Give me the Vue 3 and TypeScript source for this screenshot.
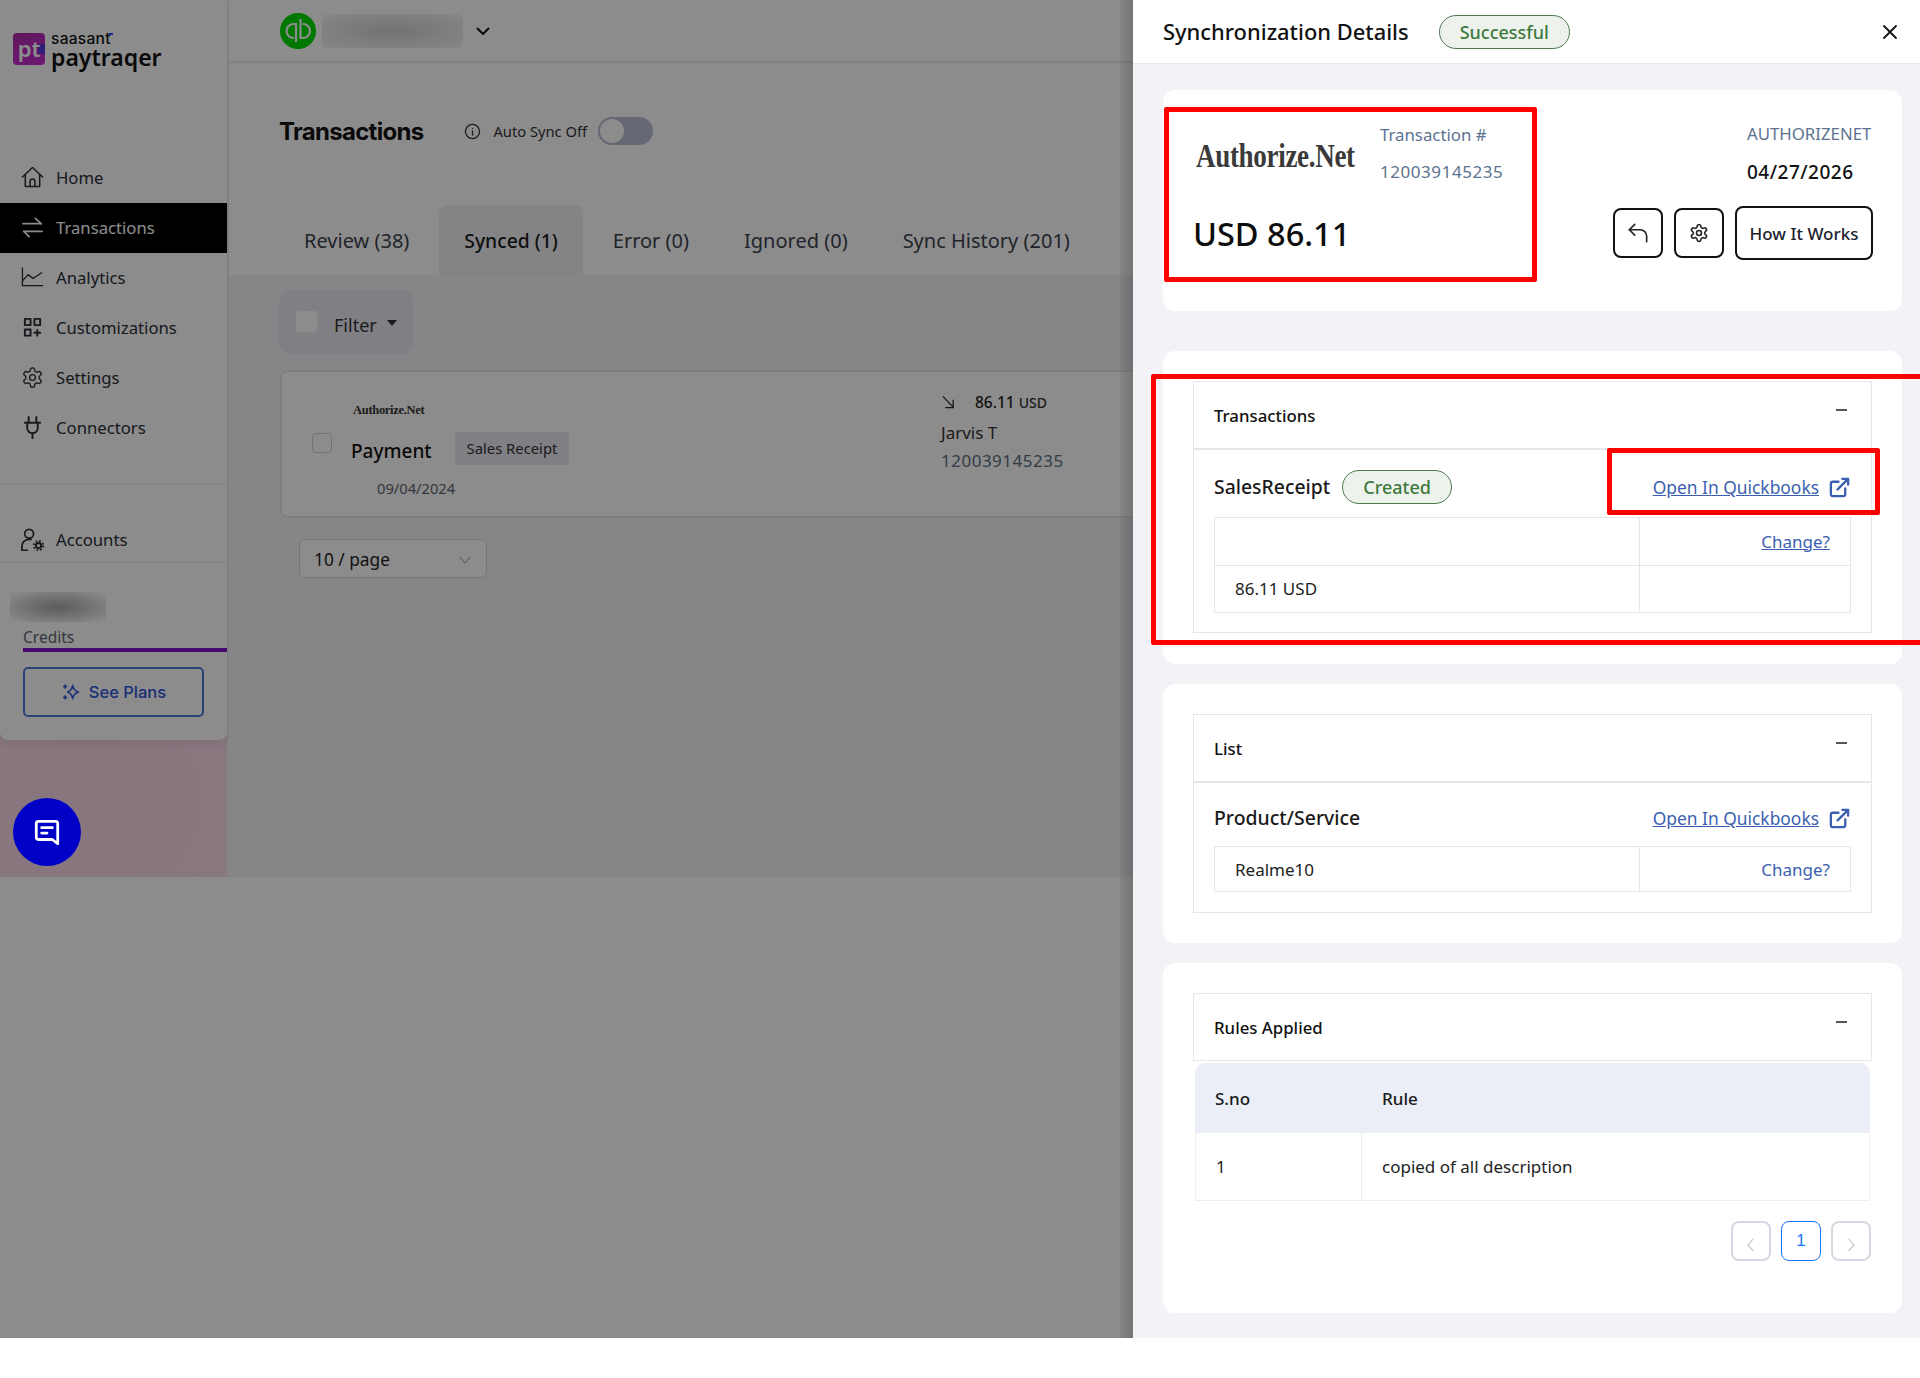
<template>
  <div class="page">
    <div class="app">
      <aside class="sidebar">
        <div class="side-card">
          <div class="logo-row">
            <div class="logo-mark">pt</div>
            <div class="logo-text">
              <span class="logo-top">saasant</span>
              <span class="logo-main">paytraqer</span>
            </div>
          </div>
          <nav class="nav">
            <a
              v-for="item in navItems"
              :key="item.label"
              class="nav-item"
              :class="{ active: item.label === 'Transactions' }"
            >
              <svg class="nav-icon" viewBox="0 0 24 24" fill="none" stroke="currentColor" :stroke-width="item.weight ?? 1.6" stroke-linecap="round" stroke-linejoin="round">
                <path v-for="d in item.paths" :key="d" :d="d" />
                <circle v-if="item.circle" cx="12" cy="12" r="3" />
              </svg>
              <span>{{ item.label }}</span>
            </a>
          </nav>
          <div class="accounts">
            <a class="nav-item">
              <svg class="nav-icon" viewBox="0 0 24 24" fill="none" stroke="currentColor" stroke-width="1.800" stroke-linecap="round" stroke-linejoin="round">
                <circle cx="8.500" cy="6" r="4.600" />
                <path d="M6.500 23.300H1V19a7 7 0 0 1 7-7h2.500" />
                <circle cx="18.300" cy="18.300" r="2.700" stroke-width="2" />
                <circle cx="18.300" cy="18.300" r="4.800" stroke-width="1.900" stroke-linecap="butt" stroke-dasharray="1.900 1.870" />
              </svg>
              <span>Accounts</span>
            </a>
          </div>
          <div class="credits">
            <div class="blur-credit"></div>
            <div class="credit-label">Credits</div>
            <div class="credit-bar"></div>
            <button class="plans-btn">
              <svg class="spark" viewBox="0 0 24 24" fill="none" stroke="currentColor" stroke-width="1.800" stroke-linejoin="round">
                <path d="M14 4c.8 4.600 2.400 6.600 7 8-4.600 1.400-6.200 3.400-7 8-.8-4.600-2.400-6.600-6-8 3.600-1.400 5.200-3.400 6-8z" />
                <path d="M5 3v5M2.500 5.500h5M5 16v5M2.500 18.500h5" />
              </svg>
              See Plans
            </button>
          </div>
        </div>
      </aside>

      <main class="main">
        <header class="topbar">
          <svg class="qb" viewBox="0 0 36 36" fill="none" stroke="#fff" stroke-width="2.200">
            <circle cx="18" cy="18" r="18" fill="#00da00" stroke="none" />
            <path d="M16 29V11h-2.500a7 7 0 0 0 0 14H14" />
            <path d="M20.500 6v19H23a7 7 0 0 0 0-14h-.5" />
          </svg>
          <div class="blur-name"></div>
          <svg class="chev" viewBox="0 0 16 16" fill="none" stroke="#111" stroke-width="2" stroke-linecap="round" stroke-linejoin="round">
            <path d="M2.500 5.500 8 11l5.500-5.500" />
          </svg>
        </header>

        <div class="title-row">
          <h1>Transactions</h1>
          <svg class="info" viewBox="0 0 24 24" fill="none" stroke="currentColor" stroke-width="1.800" stroke-linecap="round">
            <circle cx="12" cy="12" r="10" />
            <path d="M12 11v6M12 7.500v.1" />
          </svg>
          <span class="sync-label">Auto Sync Off</span>
          <div class="toggle"><div class="knob"></div></div>
        </div>

        <div class="tabs">
          <div
            v-for="tab in tabs"
            :key="tab"
            class="tab"
            :class="{ current: tab === 'Synced (1)' }"
          >{{ tab }}</div>
        </div>

        <div class="content">
          <div class="filter">
            <div class="check big"></div>
            <span>Filter</span>
            <i class="caret"></i>
          </div>

          <div class="txn-card">
            <div class="txn-left">
              <div class="small-logo">Authorize.Net</div>
              <div class="txn-row">
                <div class="check"></div>
                <span class="payment">Payment</span>
                <span class="tag">Sales Receipt</span>
              </div>
              <div class="txn-date">09/04/2024</div>
            </div>
            <div class="txn-right">
              <div class="amount-row">
                <svg class="arrow" viewBox="0 0 16 16" fill="none" stroke="#222" stroke-width="1.300">
                  <path d="M2 1.500 13 13M13 5v8.500H4.500" />
                </svg>
                <span class="amount">86.11</span>
                <span class="cur">USD</span>
              </div>
              <div class="payer">Jarvis T</div>
              <div class="ref">120039145235</div>
            </div>
          </div>

          <div class="page-size">
            <span>10 / page</span>
            <svg viewBox="0 0 16 16" fill="none" stroke="#aaa" stroke-width="1.200">
              <path d="M2 4.500 8 11.500l6-7" />
            </svg>
          </div>
        </div>
      </main>
    </div>

    <div class="backdrop"></div>

    <button class="chat">
      <svg viewBox="0 0 28 28" fill="none" stroke="#fff" stroke-width="2.600" stroke-linejoin="round" stroke-linecap="round">
        <path d="M4 6a2 2 0 0 1 2-2h16a2 2 0 0 1 2 2v19l-5-4H6a2 2 0 0 1-2-2z" />
        <path d="M9 10h10M9 15h5" />
      </svg>
    </button>

    <section class="drawer">
      <header class="drawer-head">
        <h2>Synchronization Details</h2>
        <span class="pill pill-lg">Successful</span>
        <svg class="close" viewBox="0 0 16 16" fill="none" stroke="#111" stroke-width="1.800" stroke-linecap="round">
          <path d="M2 2l12 12M14 2 2 14" />
        </svg>
      </header>

      <div class="drawer-body">
        <div class="card summary">
          <div class="red-box box-summary"></div>
          <div class="summary-left">
            <div class="summary-top">
              <div class="auth-logo">Authorize.Net</div>
              <div class="txn-id">
                <div>Transaction #</div>
                <div class="txn-num">120039145235</div>
              </div>
            </div>
            <div class="total">USD 86.11</div>
          </div>
          <div class="summary-right">
            <div class="source">AUTHORIZENET</div>
            <div class="date-line">04/27/2026</div>
            <div class="actions">
              <button class="sq-btn">
                <svg class="back-icon" viewBox="0 0 24 24" fill="none" stroke="#222" stroke-width="1.500" stroke-linecap="round" stroke-linejoin="round">
                  <path d="M9 14 4 9l5-5" />
                  <path d="M4 9h10a6 6 0 0 1 6 6v5" />
                </svg>
              </button>
              <button class="sq-btn">
                <svg viewBox="0 0 24 24" fill="none" stroke="#222" stroke-width="1.900" stroke-linecap="round" stroke-linejoin="round">
                  <path :d="gearPath" />
                  <circle cx="12" cy="12" r="3" />
                </svg>
              </button>
              <button class="how-btn">How It Works</button>
            </div>
          </div>
        </div>

        <div class="card sec-txn">
          <div class="red-box box-section"></div>
          <div class="accordion">
            <div class="acc-head">
              <span>Transactions</span>
              <i class="minus"></i>
            </div>
            <div class="acc-body">
              <div class="acc-row">
                <span class="row-title">SalesReceipt</span>
                <span class="pill">Created</span>
                <div class="red-box box-link"></div>
                <a class="open-link">
                  <span>Open In Quickbooks</span>
                  <svg viewBox="0 0 24 24" fill="none" stroke="currentColor" stroke-width="2.400" stroke-linecap="round" stroke-linejoin="round">
                    <path d="M18 13v6a2 2 0 0 1-2 2H5a2 2 0 0 1-2-2V8a2 2 0 0 1 2-2h6" />
                    <path d="M15 3h6v6M10 14 21 3" />
                  </svg>
                </a>
              </div>
              <div class="kv tall">
                <div class="kv-cell"></div>
                <div class="kv-cell right"><a class="change under">Change?</a></div>
                <div class="kv-cell">86.11 USD</div>
                <div class="kv-cell"></div>
              </div>
            </div>
          </div>
        </div>

        <div class="card">
          <div class="accordion">
            <div class="acc-head">
              <span>List</span>
              <i class="minus"></i>
            </div>
            <div class="acc-body short">
              <div class="acc-row">
                <span class="row-title">Product/Service</span>
                <a class="open-link">
                  <span>Open In Quickbooks</span>
                  <svg viewBox="0 0 24 24" fill="none" stroke="currentColor" stroke-width="2.400" stroke-linecap="round" stroke-linejoin="round">
                    <path d="M18 13v6a2 2 0 0 1-2 2H5a2 2 0 0 1-2-2V8a2 2 0 0 1 2-2h6" />
                    <path d="M15 3h6v6M10 14 21 3" />
                  </svg>
                </a>
              </div>
              <div class="kv">
                <div class="kv-cell">Realme10</div>
                <div class="kv-cell right"><a class="change">Change?</a></div>
              </div>
            </div>
          </div>
        </div>

        <div class="card rules">
          <div class="accordion">
            <div class="acc-head no-line">
              <span>Rules Applied</span>
              <i class="minus"></i>
            </div>
          </div>
          <table class="rules-table">
            <thead>
              <tr>
                <th class="col-no">S.no</th>
                <th>Rule</th>
              </tr>
            </thead>
            <tbody>
              <tr v-for="rule in rules" :key="rule.no">
                <td class="col-no">{{ rule.no }}</td>
                <td>{{ rule.text }}</td>
              </tr>
            </tbody>
          </table>
          <div class="pager">
            <button class="pg off">
              <svg viewBox="0 0 12 12" fill="none" stroke="currentColor" stroke-width="1"><path d="M8 1.500 3.500 7 8 12" /></svg>
            </button>
            <button class="pg on">1</button>
            <button class="pg off">
              <svg viewBox="0 0 12 12" fill="none" stroke="currentColor" stroke-width="1"><path d="M4 1.500 8.500 7 4 12" /></svg>
            </button>
          </div>
        </div>
      </div>
    </section>
  </div>
</template>

<script setup lang="ts">
const gearPath =
  'M12.22 2h-.44a2 2 0 0 0-2 2v.18a2 2 0 0 1-1 1.73l-.43.25a2 2 0 0 1-2 0l-.15-.08a2 2 0 0 0-2.73.73l-.22.38a2 2 0 0 0 .73 2.73l.15.1a2 2 0 0 1 1 1.72v.51a2 2 0 0 1-1 1.74l-.15.09a2 2 0 0 0-.73 2.73l.22.38a2 2 0 0 0 2.73.73l.15-.08a2 2 0 0 1 2 0l.43.25a2 2 0 0 1 1 1.73V20a2 2 0 0 0 2 2h.44a2 2 0 0 0 2-2v-.18a2 2 0 0 1 1-1.73l.43-.25a2 2 0 0 1 2 0l.15.08a2 2 0 0 0 2.73-.73l.22-.39a2 2 0 0 0-.73-2.73l-.15-.08a2 2 0 0 1-1-1.74v-.5a2 2 0 0 1 1-1.74l.15-.09a2 2 0 0 0 .73-2.73l-.22-.38a2 2 0 0 0-2.73-.73l-.15.08a2 2 0 0 1-2 0l-.43-.25a2 2 0 0 1-1-1.73V4a2 2 0 0 0-2-2z'

type NavItem = { label: string; paths: string[]; circle?: boolean; weight?: number }

const navItems: NavItem[] = [
  { label: 'Home', paths: ['M1.500 11.500 12 1.500l10.500 10', 'M4.500 9v12.500h15V9', 'M9.500 21.500V16a2.500 2.500 0 0 1 5 0v5.500'] },
  { label: 'Transactions', paths: ['M2 8h19', 'M15 2.500 21 8', 'M22 16H3', 'M8.500 21.500 3 16'], weight: 1.8 },
  { label: 'Analytics', paths: ['M1.500 2v18.500h21', 'M2 15l5.500-6 5 4 9-6'], weight: 1.4 },
  { label: 'Customizations', paths: ['M4 3h6v6.500H4z', 'M14 3h6v6.500h-6z', 'M4 14h6v6.500H4z', 'M17 14.500v6', 'M14 17.500h6'], weight: 2 },
  { label: 'Settings', paths: [gearPath], circle: true, weight: 1.4 },
  { label: 'Connectors', paths: ['M8 1v5', 'M16 1v5', 'M4 7h16', 'M6.500 7v5.500a5.500 5.500 0 0 0 11 0V7', 'M12 18v5.500'], weight: 2 },
]

const tabs = ['Review (38)', 'Synced (1)', 'Error (0)', 'Ignored (0)', 'Sync History (201)']

const rules = [{ no: 1, text: 'copied of all description' }]
</script>

<style>
html,
body {
  margin: 0;
  background: #fff;
}
</style>

<style scoped>
.page {
  position: relative;
  width: 1920px;
  height: 1378px;
  overflow: hidden;
  background: #fff;
  font-family: "Noto Sans", sans-serif;
  color: #1c1c1c;
}

.app {
  display: flex;
  height: 877px;
  background: #fff;
}

/* left rail */
.sidebar {
  width: 227px;
  flex: none;
  background: radial-gradient(circle at 90px 800px, #f8d6e6 0, #fbe0ef 50%, #fde8f5 100%);
  border-right: 2px solid #f0f0f4;
}

.side-card {
  height: 740px;
  background: #fff;
  border-radius: 0 0 8px 8px;
  box-shadow: 0 4px 10px rgba(0, 0, 0, 0.08);
}

.logo-row {
  height: 153px;
  box-sizing: border-box;
  padding: 33px 0 0 13px;
  display: flex;
  gap: 6px;
}

.logo-mark {
  width: 32px;
  height: 32px;
  border-radius: 4px;
  background:
    linear-gradient(#0000 35%, #5538d8 35%, #5538d8 65%, #0000 65%) right / 22% 100% no-repeat,
    linear-gradient(160deg, #b02ba8, #c82ed4);
  color: #fff;
  font: 600 22px/30px "Noto Sans", sans-serif;
  text-align: center;
}

.logo-text {
  display: flex;
  flex-direction: column;
  margin-top: -2px;
  color: #111;
}

.logo-top {
  position: relative;
  align-self: flex-start;
  font: 500 15.500px/16px "Inter", sans-serif;
  letter-spacing: 0.3px;
}

.logo-top::after {
  content: "";
  position: absolute;
  right: -2px;
  top: 2px;
  width: 4px;
  height: 2px;
  background: #3a4fff;
}

.logo-main {
  font: 600 23px/21px "Noto Sans", sans-serif;
}

.nav-item {
  height: 50px;
  display: flex;
  align-items: center;
  gap: 12px;
  padding: 0 0 1px 21px;
  font-size: 16.700px;
  color: #2a2f36;
  box-sizing: border-box;
}

.nav-item.active {
  background: #000;
  color: #fff;
}

.nav-icon {
  width: 23px;
  height: 23px;
  flex: none;
}

.accounts {
  margin-top: 30px;
  padding: 30px 0 0;
  height: 80px;
  box-sizing: border-box;
  border-top: 2px solid #f6f6f8;
  border-bottom: 2px solid #f6f6f8;
}

.credits {
  padding: 29px 0 0 23px;
}

.blur-credit {
  width: 96px;
  height: 30px;
  margin-left: -13px;
  background: radial-gradient(ellipse at center, #a8a8a8 0, #cfcfcf 45%, #f4f4f4 85%, #fff 100%);
}

.credit-label {
  font-size: 15.500px;
  line-height: 20px;
  margin-top: 5px;
  color: #5e6670;
}

.credit-bar {
  height: 4px;
  margin-top: 1px;
  background: #7e12c8;
}

.plans-btn {
  display: flex;
  align-items: center;
  justify-content: center;
  gap: 8px;
  width: 181px;
  height: 50px;
  margin-top: 15px;
  background: #fff;
  border: 2px solid #4a7bd8;
  border-radius: 5px;
  color: #2f54d8;
  font: 500 16.500px "Inter", sans-serif;
}

.spark {
  width: 20px;
  height: 20px;
}

/* main column */
.main {
  flex: 1;
  min-width: 0;
  background: #f4f4f7;
}

.topbar {
  height: 61px;
  background: #fff;
  border-bottom: 2px solid #ececf2;
  display: flex;
  align-items: center;
  padding-left: 51px;
}

.qb {
  width: 36px;
  height: 36px;
}

.blur-name {
  width: 141px;
  height: 34px;
  margin-left: 6px;
  border-radius: 6px;
  background: radial-gradient(ellipse at center, #cfcfcf 0, #e4e4e4 50%, #f5f5f5 100%);
}

.chev {
  width: 16px;
  height: 16px;
  margin-left: 12px;
}

.title-row {
  height: 56px;
  padding-top: 40px;
  padding-left: 50px;
  background: #fff;
  display: flex;
  align-items: center;
}

h1 {
  margin: 0;
  font: 700 24px "Inter", sans-serif;
  letter-spacing: -0.7px;
  color: #111;
}

.info {
  width: 17px;
  height: 17px;
  margin-left: 41px;
  color: #333;
}

.sync-label {
  margin-left: 12px;
  font-size: 14.700px;
  color: #333;
}

.toggle {
  width: 55px;
  height: 28px;
  margin-left: 11px;
  border-radius: 14px;
  background: #b8bed0;
  position: relative;
}

.knob {
  position: absolute;
  left: 2px;
  top: 2px;
  width: 24px;
  height: 24px;
  border-radius: 50%;
  background: #fff;
}

.tabs {
  height: 116px;
  box-sizing: border-box;
  padding: 46px 0 0 50px;
  background: #fff;
  display: flex;
  gap: 5px;
}

.tab {
  height: 70px;
  padding: 0 25px;
  line-height: 72px;
  font-size: 20px;
  color: #3c4350;
  border-radius: 8px 8px 0 0;
  white-space: nowrap;
}

.tab.current {
  background: #f1f1f6;
  color: #1a1a1a;
  font-size: 19.300px;
  font-weight: 500;
}

.content {
  padding: 15px 0 0 50px;
}

.filter {
  width: 134px;
  height: 64px;
  box-sizing: border-box;
  border-radius: 12px;
  background: #e7e7f0;
  display: flex;
  align-items: center;
  padding-left: 16px;
  font-size: 18px;
  color: #333;
}

.filter span {
  margin-left: 16px;
  margin-top: 6px;
}

.caret {
  width: 0;
  height: 0;
  margin-left: 10px;
  margin-top: 2px;
  border: 5px solid transparent;
  border-top: 6px solid #333;
  border-bottom: 0;
}

.check {
  width: 20px;
  height: 20px;
  box-sizing: border-box;
  background: #fff;
  border: 1px solid #d0d0d6;
  border-radius: 4px;
  flex: none;
}

.check.big {
  width: 23px;
  height: 23px;
  margin-top: -2px;
  border-color: #ededf2;
}

.txn-card {
  display: flex;
  margin: 16px 0 0 1px;
  height: 148px;
  box-sizing: border-box;
  background: #fff;
  border: 2px solid #e8e8ee;
  border-radius: 8px 0 0 8px;
}

.txn-left {
  width: 659px;
  flex: none;
  padding: 30px 0 0 30px;
  box-sizing: border-box;
}

.small-logo {
  margin-left: 41px;
  font: 700 12.500px/16px "Liberation Serif", serif;
  letter-spacing: -0.3px;
  color: #333;
}

.txn-row {
  display: flex;
  align-items: flex-start;
  margin-top: 14px;
  height: 33px;
}

.txn-row .check {
  margin-top: 1px;
}

.payment {
  margin-left: 19px;
  font-size: 19px;
  font-weight: 500;
  line-height: 33px;
  color: #111;
  padding-top: 3px;
}

.tag {
  margin-left: 23px;
  padding: 0 12px;
  height: 33px;
  line-height: 33px;
  background: #e8e8f0;
  font-size: 14.800px;
  color: #333;
}

.txn-date {
  margin: 13px 0 0 65px;
  font-size: 14.700px;
  color: #5b6470;
}

.txn-right {
  padding-top: 16px;
}

.amount-row {
  display: flex;
  align-items: center;
  height: 28px;
}

.arrow {
  width: 15px;
  height: 15px;
}

.amount {
  margin-left: 19px;
  font-size: 15.500px;
  font-weight: 500;
  color: #222;
}

.cur {
  margin-left: 4px;
  font-size: 14px;
  font-weight: 500;
  color: #333;
}

.payer {
  margin-top: 3px;
  font-size: 17px;
  line-height: 28px;
  color: #333;
}

.ref {
  font-size: 17px;
  letter-spacing: 0.5px;
  line-height: 28px;
  color: #5b6f80;
}

.page-size {
  width: 188px;
  height: 39px;
  margin: 21px 0 0 20px;
  box-sizing: border-box;
  border: 1px solid #d9d9d9;
  border-radius: 6px;
  background: #fff;
  padding: 2px 14px 0;
  display: flex;
  align-items: center;
  justify-content: space-between;
  font-size: 17.300px;
  color: #222;
}

.page-size svg {
  width: 14px;
  height: 14px;
}

/* overlay and drawer */
.backdrop {
  position: absolute;
  left: 0;
  top: 0;
  right: 0;
  height: 1338px;
  background: rgba(0, 0, 0, 0.45);
}

.chat {
  position: absolute;
  left: 13px;
  top: 798px;
  width: 68px;
  height: 68px;
  padding: 0;
  border: 0;
  border-radius: 50%;
  background: #0000c6;
  display: flex;
  align-items: center;
  justify-content: center;
}

.chat svg {
  width: 30px;
  height: 30px;
}

.drawer {
  position: absolute;
  top: 0;
  right: 0;
  width: 787px;
  height: 1338px;
  overflow: hidden;
  background: #f3f3f7;
}

/* shadow sits outside the clipped drawer so it can't spill on the white strip below */
.page::after {
  content: "";
  position: absolute;
  left: 1120px;
  top: 0;
  width: 13px;
  height: 1338px;
  background: linear-gradient(90deg, rgba(0, 0, 0, 0.05), rgba(0, 0, 0, 0.17));
}

.drawer-head {
  height: 64px;
  box-sizing: border-box;
  background: #fff;
  border-bottom: 1px solid #e8e8ee;
  display: flex;
  align-items: center;
  padding: 0 22px 0 30px;
}

h2 {
  margin: 0;
  font-size: 21.900px;
  font-weight: 500;
  color: #111;
}

.close {
  width: 16px;
  height: 16px;
  margin-left: auto;
}

.pill {
  display: inline-flex;
  align-items: center;
  justify-content: center;
  height: 34px;
  box-sizing: border-box;
  margin-left: 12px;
  padding: 0 20px;
  background: #edf2ed;
  border: 1px solid #4b7a4b;
  border-radius: 17px;
  color: #3e7a3e;
  font-size: 18px;
  font-weight: 500;
}

.pill-lg {
  margin-left: 30px;
}

.drawer-body {
  padding: 26px 18px 25px 30px;
  display: flex;
  flex-direction: column;
}

.card {
  position: relative;
  background: #fff;
  border-radius: 12px;
  padding: 30px;
  margin-bottom: 20px;
}

.sec-txn {
  padding-bottom: 31px;
}

.red-box {
  position: absolute;
  box-sizing: border-box;
  border: 5px solid #f00;
  border-radius: 2px;
  pointer-events: none;
}

.box-summary {
  left: 1px;
  top: 17px;
  width: 373px;
  height: 175px;
}

.box-section {
  left: -12px;
  top: 23px;
  right: -40px;
  height: 271px;
}

.box-link {
  right: -29px;
  top: -2px;
  width: 273px;
  height: 67px;
}

.summary {
  height: 221px;
  box-sizing: border-box;
  padding: 0;
  margin-bottom: 40px;
  display: flex;
  justify-content: space-between;
}

.summary-left {
  padding: 30px 0 0 30px;
}

.summary-top {
  display: flex;
  align-items: flex-start;
}

.auth-logo {
  margin: 17px 0 0 3px;
  width: 184px;
  font: 700 33px/38px "Liberation Serif", serif;
  letter-spacing: -0.4px;
  white-space: nowrap;
  color: #3a3a3a;
  transform: scaleX(0.82);
  transform-origin: left center;
}

.txn-id {
  font-size: 16.800px;
  line-height: 37px;
  color: #5c7390;
  margin-top: -4px;
}

.txn-num {
  font-size: 17px;
  letter-spacing: 0.55px;
}

.total {
  margin-top: 22px;
  font-size: 32.500px;
  font-weight: 500;
  line-height: 44px;
  color: #0d0d0d;
}

.summary-right {
  padding: 30px 29px 0 0;
  display: flex;
  flex-direction: column;
  align-items: flex-end;
}

.source,
.date-line {
  width: 126px;
  font-size: 16.800px;
  line-height: 28px;
  white-space: nowrap;
  color: #5c7390;
}

.date-line {
  margin-top: 10px;
  font-size: 19px;
  letter-spacing: 0.5px;
  font-weight: 500;
  color: #111;
}

.actions {
  display: flex;
  align-items: center;
  gap: 11px;
  margin-top: 20px;
}

.sq-btn {
  width: 50px;
  height: 50px;
  padding: 0;
  background: #fff;
  border: 2px solid #111;
  border-radius: 8px;
  display: flex;
  align-items: center;
  justify-content: center;
}

.sq-btn svg {
  width: 20px;
  height: 20px;
}

.sq-btn svg.back-icon {
  width: 26px;
  height: 26px;
}

.how-btn {
  width: 138px;
  height: 54px;
  padding: 0;
  background: #fff;
  border: 2px solid #111;
  border-radius: 8px;
  font: 500 17px "Noto Sans", sans-serif;
  color: #1c2230;
}

.accordion {
  border: 1px solid #e6e6ea;
}

.acc-head {
  height: 68px;
  box-sizing: border-box;
  border-bottom: 2px solid #e6e6ea;
  padding: 0 24px 0 20px;
  display: flex;
  align-items: center;
  justify-content: space-between;
  font-size: 16.800px;
  font-weight: 500;
  color: #111;
}

.acc-head.no-line {
  height: 66px;
  border-bottom: 0;
}

.minus {
  width: 11px;
  height: 2px;
  margin-top: -10px;
  background: #555;
}

.acc-body {
  padding: 0 20px 19px 20px;
}

.acc-body.short {
  padding-bottom: 20px;
}

.acc-row {
  position: relative;
  display: flex;
  align-items: center;
  min-height: 30px;
  padding: 20px 0 13px;
}

.row-title {
  font-size: 19.400px;
  font-weight: 500;
  line-height: 30px;
  color: #1a1a1a;
}

.open-link {
  margin-left: auto;
  display: flex;
  align-items: center;
  gap: 9px;
  color: #3b5fb0;
  font-size: 17.400px;
}

.open-link span {
  text-decoration: underline;
}

.open-link svg {
  width: 23px;
  height: 23px;
}

.kv {
  display: grid;
  grid-template-columns: 425px 1fr;
  grid-auto-rows: 45px;
  border: 1px solid #e6e6ea;
  border-width: 1px 0 0 1px;
}

.kv.tall {
  grid-auto-rows: 47.500px;
}

.kv-cell {
  display: flex;
  align-items: center;
  padding: 0 20px;
  border: solid #e6e6ea;
  border-width: 0 1px 1px 0;
  font-size: 17px;
  color: #222;
}

.kv-cell.right {
  justify-content: flex-end;
}

.change {
  color: #3b5fb0;
}

.change.under {
  text-decoration: underline;
}

.rules {
  height: 350px;
  box-sizing: border-box;
  margin-bottom: 0;
}

.rules-table {
  width: calc(100% - 4px);
  margin: 2px 2px 0;
  border-collapse: separate;
  border-spacing: 0;
  font-size: 17px;
}

.rules-table th {
  height: 70px;
  padding: 0 20px;
  background: #ebeef6;
  text-align: left;
  font-weight: 500;
  color: #1a1a1a;
}

.rules-table th:first-child {
  border-top-left-radius: 10px;
}

.rules-table th:last-child {
  border-top-right-radius: 10px;
}

.rules-table td {
  height: 67px;
  padding: 0 20px;
  border-bottom: 1px solid #eeeef2;
  color: #222;
}

.rules-table td:first-child {
  border-left: 1px solid #eeeef2;
  border-right: 1px solid #eeeef2;
}

.rules-table td:last-child {
  border-right: 1px solid #eeeef2;
}

.col-no {
  width: 125px;
}

.pager {
  display: flex;
  justify-content: flex-end;
  gap: 10px;
  margin: 20px 1px 0 0;
}

.pg {
  width: 40px;
  height: 40px;
  padding: 0;
  background: #fff;
  border: 2px solid #d6d9e2;
  border-radius: 8px;
  display: flex;
  align-items: center;
  justify-content: center;
  color: #bfc3cc;
  font: 500 17px "Liberation Sans", sans-serif;
}

.pg svg {
  width: 14px;
  height: 14px;
  margin-top: 5px;
}

.pg.on {
  border: 1px solid #1677ff;
  color: #1677ff;
}
</style>
